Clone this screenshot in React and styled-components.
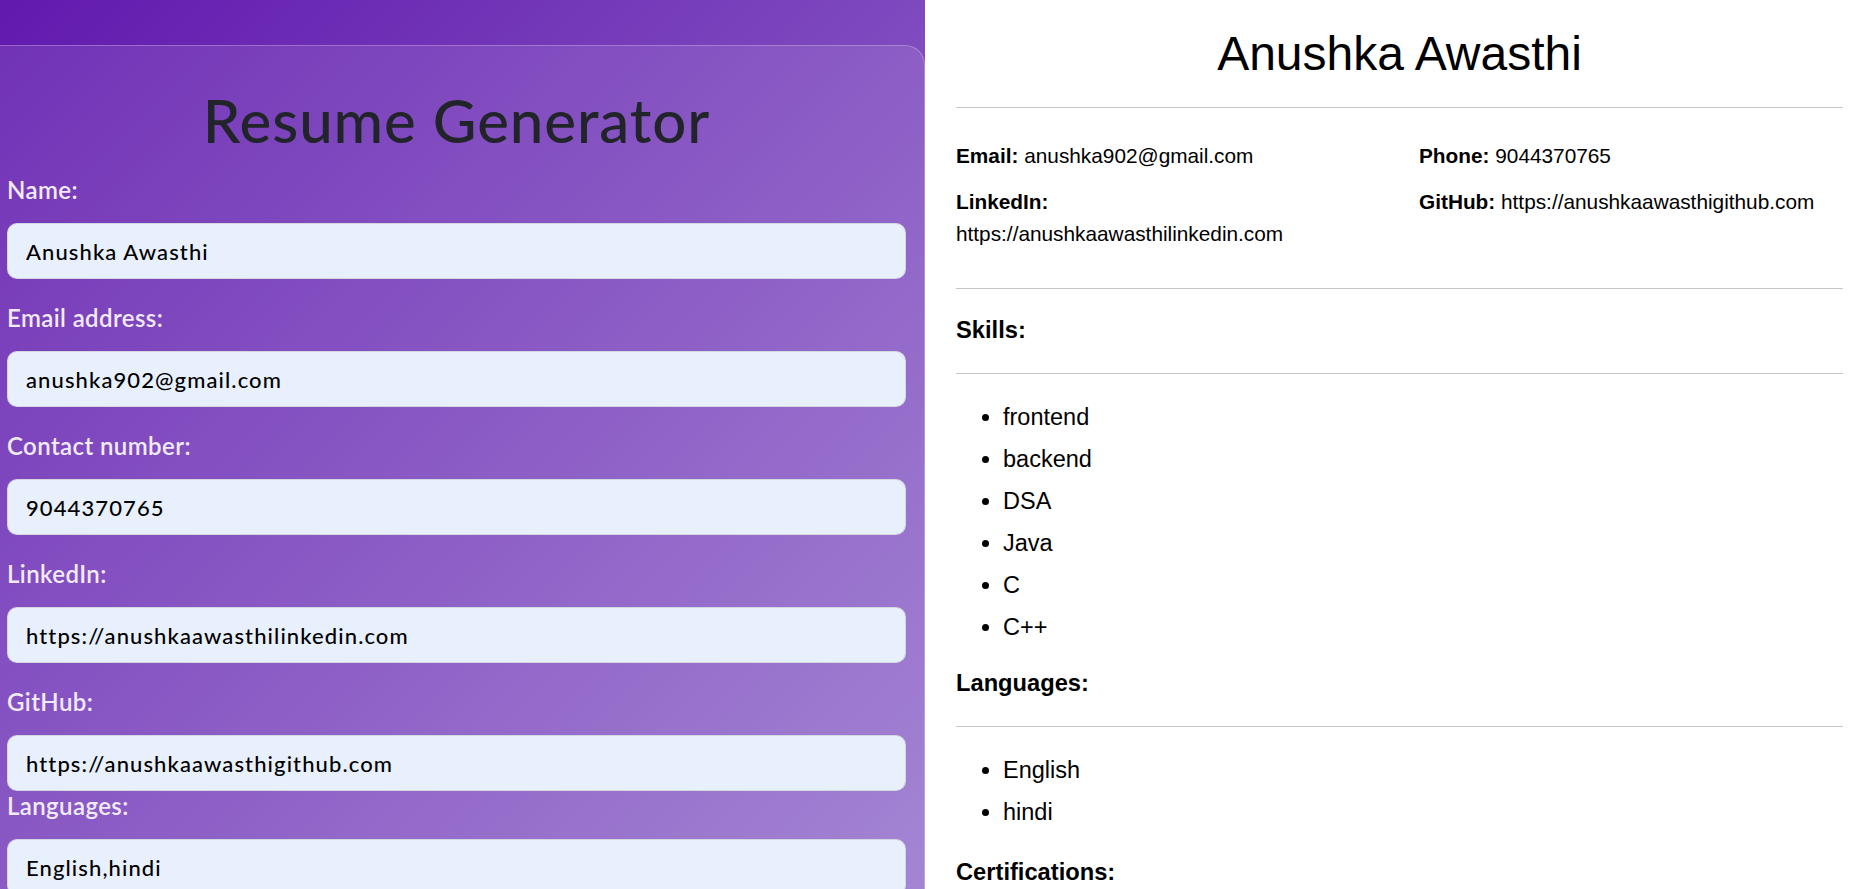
import React from "react";
import styled, { createGlobalStyle } from "styled-components";

const GlobalStyle = createGlobalStyle`
  html, body {
    margin: 0;
    padding: 0;
    height: 100%;
    overflow: hidden;
  }
  #root {
    height: 100%;
  }
`;

const Page = styled.div`
  display: flex;
  height: 100vh;
  overflow: hidden;
`;

const FormSide = styled.div`
  width: 925px;
  flex-shrink: 0;
  padding-top: 45px;
  box-sizing: border-box;
  background: linear-gradient(135deg, #6119ae 0%, #9a78cf 100%);
  font-family: Lato, "Noto Sans", sans-serif;
`;

const FormCard = styled.div`
  background: rgba(255, 255, 255, 0.1);
  border: 1px solid rgba(255, 255, 255, 0.25);
  border-left: none;
  border-radius: 0 20px 0 0;
  padding: 38px 18px 40px 7px;
  min-height: 900px;
  box-sizing: border-box;
`;

const Title = styled.h1`
  margin: 0 0 16px;
  text-align: center;
  font-size: 60px;
  line-height: 72px;
  font-weight: 500;
  color: #212529;
  letter-spacing: 0.9px;
`;

const Group = styled.div`
  margin-bottom: ${(p) => p.$after}px;
`;

const Label = styled.label`
  display: block;
  font-size: 24px;
  line-height: ${(p) => (p.$compact ? "30px" : "36px")};
  margin-bottom: ${(p) => (p.$compact ? "18px" : "15px")};
  font-weight: 600;
  letter-spacing: 0.4px;
  color: #f1eaf9;
`;

const Input = styled.input`
  display: block;
  width: 100%;
  height: 56px;
  box-sizing: border-box;
  padding: 0 18px;
  border: 1px solid rgba(206, 212, 218, 0.85);
  border-radius: 10px;
  background: #e8f0fe;
  font-family: Lato, "Noto Sans", sans-serif;
  font-size: 22px;
  font-weight: 500;
  letter-spacing: 1.1px;
  color: #000;
  outline: none;
`;

const PreviewSide = styled.div`
  flex: 1;
  background: #fff;
  padding: 26px 16px 0 31px;
  font-family: "Liberation Sans", Arial, sans-serif;
  color: #000;
  overflow: hidden;
`;

const Name = styled.h1`
  margin: 0 0 26px;
  text-align: center;
  font-size: 48px;
  line-height: 55px;
  font-weight: 400;
`;

const Rule = styled.hr`
  margin: 0;
  border: none;
  border-top: 1px solid #c6c6c6;
`;

const InfoGrid = styled.div`
  display: grid;
  grid-template-columns: 410px 1fr;
  column-gap: 53px;
  row-gap: 14px;
  margin: 32px 0 38px;
  font-size: 20.8px;
  line-height: 32px;
`;

const InfoItem = styled.div`
  strong {
    font-weight: 700;
  }
`;

const SectionTitle = styled.h3`
  margin: ${(p) => p.$top ?? 28}px 0 29px;
  font-size: 23.7px;
  line-height: 27px;
  font-weight: 700;
`;

const List = styled.ul`
  margin: 28px 0 10px;
  padding-left: 47px;
  font-size: 23.5px;
  line-height: 30px;
`;

const Item = styled.li`
  & + & {
    margin-top: 12px;
  }
`;

const fields = [
  { label: "Name:", value: "Anushka Awasthi", after: 21 },
  { label: "Email address:", value: "anushka902@gmail.com", after: 21 },
  { label: "Contact number:", value: "9044370765", after: 21 },
  { label: "LinkedIn:", value: "https://anushkaawasthilinkedin.com", after: 21 },
  { label: "GitHub:", value: "https://anushkaawasthigithub.com", after: 0 },
  { label: "Languages:", value: "English,hindi", after: 21, compact: true },
];

const info = [
  { label: "Email:", value: "anushka902@gmail.com" },
  { label: "Phone:", value: "9044370765" },
  { label: "LinkedIn:", value: "https://anushkaawasthilinkedin.com" },
  { label: "GitHub:", value: "https://anushkaawasthigithub.com" },
];

const skills = ["frontend", "backend", "DSA", "Java", "C", "C++"];
const languages = ["English", "hindi"];

export default function App() {
  return (
    <>
      <GlobalStyle />
      <Page>
        <FormSide>
          <FormCard>
            <Title>Resume Generator</Title>
            {fields.map((f) => (
              <Group key={f.label} $after={f.after}>
                <Label $compact={f.compact}>{f.label}</Label>
                <Input defaultValue={f.value} />
              </Group>
            ))}
          </FormCard>
        </FormSide>

        <PreviewSide>
          <Name>Anushka Awasthi</Name>
          <Rule />
          <InfoGrid>
            {info.map((i) => (
              <InfoItem key={i.label}>
                <strong>{i.label}</strong> {i.value}
              </InfoItem>
            ))}
          </InfoGrid>
          <Rule />

          <SectionTitle>Skills:</SectionTitle>
          <Rule />
          <List>
            {skills.map((s) => (
              <Item key={s}>{s}</Item>
            ))}
          </List>

          <SectionTitle>Languages:</SectionTitle>
          <Rule />
          <List>
            {languages.map((l) => (
              <Item key={l}>{l}</Item>
            ))}
          </List>

          <SectionTitle $top={32}>Certifications:</SectionTitle>
        </PreviewSide>
      </Page>
    </>
  );
}
